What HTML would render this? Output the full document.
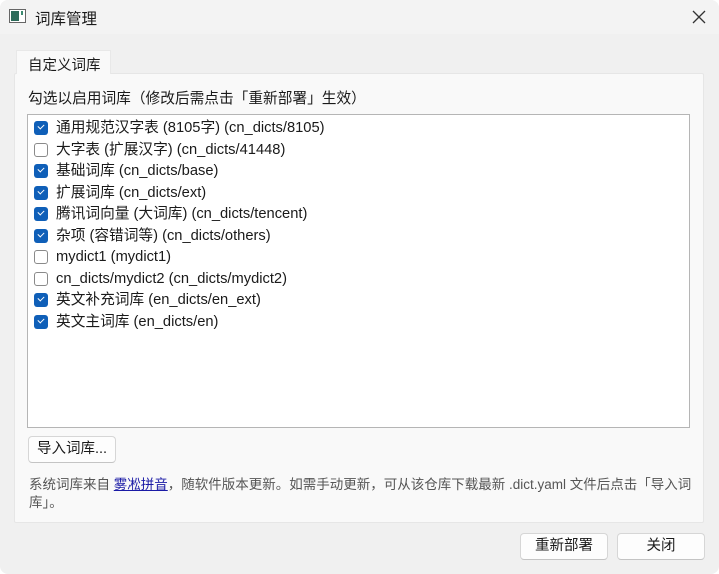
<!DOCTYPE html>
<html><head><meta charset="utf-8"><style>
*{box-sizing:border-box;margin:0;padding:0}
body{width:719px;height:574px;background:#fff;font-family:"Liberation Sans","Noto Sans CJK SC",sans-serif;font-size:14.7px;color:#1a1a1a;position:relative;overflow:hidden}
.win{position:absolute;left:0;top:0;width:719px;height:574px;background:#f0f0f0;border-radius:8px;overflow:hidden}
.title{position:absolute;left:0;top:0;width:719px;height:34px;background:#f3f3f3}
.abs{position:absolute}
.tab{left:16px;top:50px;width:95px;height:24px;background:#f9f9f9;border:1px solid #e8e8e8;border-bottom:none;padding:3px 0 0 11px;font-size:14.5px}
.panel{left:14px;top:73px;width:690px;height:450px;background:#f9f9f9;border:1px solid #e6e6e6;border-radius:2px}
.list{left:27px;top:114px;width:663px;height:314px;background:#fff;border:1px solid #b5b5b5}
.item{position:absolute;left:6px;height:22px;line-height:22px;white-space:nowrap}
.cb{position:absolute;left:0;top:5px;width:14px;height:14px;border-radius:3px}
.on{background:#0f5fb8}
.on::after{content:"";position:absolute;left:4px;top:3px;width:5px;height:3px;border-left:1.3px solid #fff;border-bottom:1.3px solid #fff;transform:rotate(-45deg)}
.off{border:1px solid #8a8a8a;background:#fff}
.txt{position:absolute;left:22px;top:1px}
.btn{background:#fdfdfd;border:1px solid #d6d6d6;border-bottom-color:#c4c4c4;border-radius:4px;text-align:center;font-size:14.5px}
</style></head><body><div class="win">
<div class="title"></div>
<svg class="abs" style="left:9px;top:9px" width="18" height="16"><rect x="0.5" y="0.5" width="16" height="13" fill="#fff" stroke="#666"/><rect x="2" y="2" width="8" height="10" fill="#2d6b5a"/><rect x="12" y="2" width="2" height="4" fill="#3c8a70"/></svg>
<div class="abs" style="left:35px;top:7px;font-size:15.5px">词库管理</div>
<svg class="abs" style="left:692px;top:10px" width="14" height="14"><path d="M1 1L13 13M13 1L1 13" stroke="#333" stroke-width="1.3"/></svg>
<div class="abs panel"></div>
<div class="abs tab">自定义词库</div>
<div class="abs" style="left:28px;top:87px">勾选以启用词库（修改后需点击「重新部署」生效）</div>
<div class="abs list">
<div class="item" style="top:1px"><span class="cb on"></span><span class="txt">通用规范汉字表 (8105字) (cn_dicts/8105)</span></div>
<div class="item" style="top:22.5px"><span class="cb off"></span><span class="txt">大字表 (扩展汉字) (cn_dicts/41448)</span></div>
<div class="item" style="top:44px"><span class="cb on"></span><span class="txt">基础词库 (cn_dicts/base)</span></div>
<div class="item" style="top:65.5px"><span class="cb on"></span><span class="txt">扩展词库 (cn_dicts/ext)</span></div>
<div class="item" style="top:87px"><span class="cb on"></span><span class="txt">腾讯词向量 (大词库) (cn_dicts/tencent)</span></div>
<div class="item" style="top:108.5px"><span class="cb on"></span><span class="txt">杂项 (容错词等) (cn_dicts/others)</span></div>
<div class="item" style="top:130px"><span class="cb off"></span><span class="txt">mydict1 (mydict1)</span></div>
<div class="item" style="top:151.5px"><span class="cb off"></span><span class="txt">cn_dicts/mydict2 (cn_dicts/mydict2)</span></div>
<div class="item" style="top:173px"><span class="cb on"></span><span class="txt">英文补充词库 (en_dicts/en_ext)</span></div>
<div class="item" style="top:194.5px"><span class="cb on"></span><span class="txt">英文主词库 (en_dicts/en)</span></div>
</div>
<div class="abs btn" style="left:28px;top:436px;width:88px;height:27px;line-height:25px">导入词库...</div>
<div class="abs" style="left:29px;top:476px;width:664px;font-size:13.5px;line-height:18px;color:#555">系统词库来自 <span style="color:#1a1aa6;text-decoration:underline">雾凇拼音</span>，随软件版本更新。如需手动更新，可从该仓库下载最新 .dict.yaml 文件后点击「导入词库」。</div>
<div class="abs btn" style="left:520px;top:533px;width:88px;height:27px;line-height:25px">重新部署</div>
<div class="abs btn" style="left:617px;top:533px;width:88px;height:27px;line-height:25px">关闭</div>
</div></body></html>
